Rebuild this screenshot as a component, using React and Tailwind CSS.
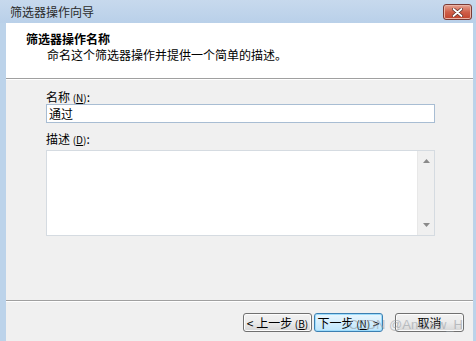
const font = { fontFamily: '"Noto Sans CJK SC", "Noto Sans", sans-serif' };

function Btn({ children, focused }) {
  return (
    <button
      className={
        focused
          ? "h-[19px] w-[69px] rounded-[3px] border border-[#3c7fb1] bg-gradient-to-b from-[#eaf6fd] to-[#bee6fd] text-[12px] leading-none text-black shadow-[inset_0_0_0_1px_#9ddcfc]"
          : "h-[19px] w-[69px] rounded-[3px] border border-[#707070] bg-gradient-to-b from-[#f2f2f2] via-[#ebebeb] to-[#d6d6d6] text-[12px] leading-none text-black shadow-[inset_0_0_0_1px_#fcfcfc]"
      }
    >
      {children}
    </button>
  );
}

export default function App() {
  return (
    <div className="flex h-[341px] w-[476px] flex-col overflow-hidden bg-[#bcd3ea]" style={font}>
      {/* title bar */}
      <div className="flex h-[23px] shrink-0 items-start justify-between bg-gradient-to-b from-[#c7d9ed] to-[#b9d0e9] pl-[10px] pr-[4px]">
        <span className="mt-[4px] text-[12px] leading-[15px] text-[#2a2a2a]">筛选器操作向导</span>
        <div className="mt-[4px] flex h-[16px] w-[29px] items-center justify-center rounded-[3px] border border-[#7a3a35] bg-gradient-to-b from-[#e5a392] via-[#cf5f4a] to-[#c2432d] shadow-[inset_0_0_0_1px_#eab4a6]">
          <svg width="11" height="9" viewBox="0 0 11 9">
            <path d="M1.5 1 L9.5 8 M9.5 1 L1.5 8" stroke="#5a2a24" strokeWidth="3.2" strokeLinecap="round" />
            <path d="M1.5 1 L9.5 8 M9.5 1 L1.5 8" stroke="#ffffff" strokeWidth="1.8" strokeLinecap="round" />
          </svg>
        </div>
      </div>

      {/* window body */}
      <div className="ml-[6px] mr-[3px] flex flex-1 flex-col bg-[#f0f0f0]">
        {/* header */}
        <div className="h-[55px] shrink-0 bg-white pt-[8px]">
          <div className="pl-[20px] text-[12px] font-bold leading-[15px] text-black">筛选器操作名称</div>
          <div className="pl-[41px] pt-[1px] text-[12px] leading-[15px] text-black">命名这个筛选器操作并提供一个简单的描述。</div>
        </div>
        <div className="h-px bg-[#a0a0a0]" />
        <div className="h-px bg-white" />

        {/* content */}
        <div className="flex-1 pl-[40px] pr-[38px] pt-[9px]">
          <div className="h-[15px] text-[12px] leading-[15px] text-black">
            名称 <span className="text-[10px]">(<u>N</u>)</span>:
          </div>
          <div className="h-[19px] border border-[#a8bdd3] bg-white pl-[2px] text-[12px] leading-[17px] text-black">通过</div>
          <div className="mt-[8px] h-[15px] text-[12px] leading-[15px] text-black">
            描述 <span className="text-[10px]">(<u>D</u>)</span>:
          </div>
          <div className="mt-[4px] flex h-[86px] border border-[#d5dbe1] bg-white">
            <div className="flex-1" />
            <div className="flex w-[17px] flex-col items-center justify-between border-l border-[#e8e8e8] bg-[#f0f0f0] py-[8px]">
              <svg width="7" height="4" viewBox="0 0 7 4"><path d="M0 4 L3.5 0 L7 4 Z" fill="#8a8a8a" /></svg>
              <svg width="7" height="4" viewBox="0 0 7 4"><path d="M0 0 L7 0 L3.5 4 Z" fill="#8a8a8a" /></svg>
            </div>
          </div>
        </div>

        {/* footer */}
        <div className="h-px bg-[#a0a0a0]" />
        <div className="h-px bg-white" />
        <div className="relative flex h-[39px] shrink-0 items-start justify-end pr-[9px] pt-[11px]">
          <Btn>&lt; 上一步 <span className="text-[10px]">(<u>B</u>)</span></Btn>
          <div className="w-[2px]" />
          <Btn focused>下一步 <span className="text-[10px]">(<u>N</u>)</span> &gt;</Btn>
          <div className="w-[12px]" />
          <Btn>取消</Btn>
          <span className="pointer-events-none absolute right-[10px] top-[15px] text-[13px] leading-[15px] text-[#9aa0a6] opacity-60" style={{ fontFamily: '"Liberation Sans", sans-serif' }}>
            CSDN @Andrew_H
          </span>
        </div>
      </div>
    </div>
  );
}
